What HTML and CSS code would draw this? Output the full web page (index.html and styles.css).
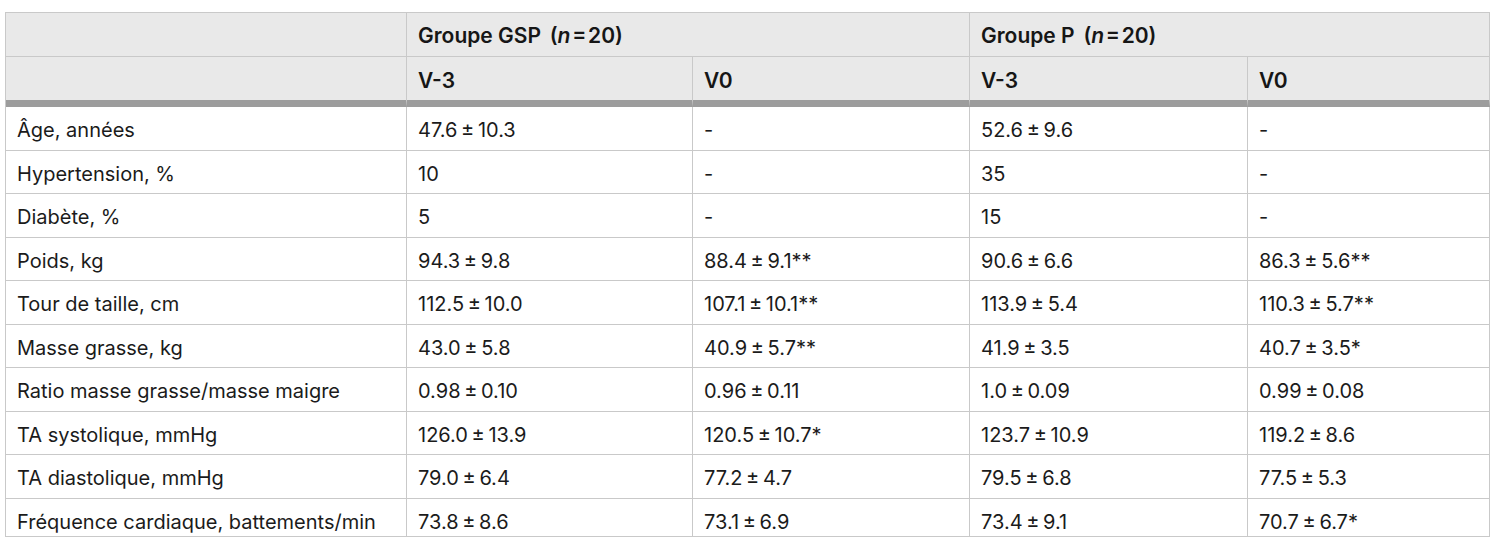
FILE: index.html
```html
<!DOCTYPE html>
<html lang="fr">
<head>
<meta charset="utf-8">
<link rel="stylesheet" href="styles.css">
</head>
<body>
<table class="data">
  <colgroup>
    <col class="c-label">
    <col class="c-a">
    <col class="c-b">
    <col class="c-c">
    <col class="c-d">
  </colgroup>
  <thead>
    <tr class="h1">
      <th></th>
      <th colspan="2">Groupe GSP &#8201;(<i>n</i>&#8202;=&#8202;20)</th>
      <th colspan="2">Groupe P &#8201;(<i>n</i>&#8202;=&#8202;20)</th>
    </tr>
    <tr class="h2">
      <th></th>
      <th>V-3</th>
      <th>V0</th>
      <th>V-3</th>
      <th>V0</th>
    </tr>
  </thead>
  <tbody>
    <tr><td>Âge, années</td><td>47.6&#8201;±&#8201;10.3</td><td>-</td><td>52.6&#8201;±&#8201;9.6</td><td>-</td></tr>
    <tr><td>Hypertension, %</td><td>10</td><td>-</td><td>35</td><td>-</td></tr>
    <tr><td>Diabète, %</td><td>5</td><td>-</td><td>15</td><td>-</td></tr>
    <tr><td>Poids, kg</td><td>94.3&#8201;±&#8201;9.8</td><td>88.4&#8201;±&#8201;9.1**</td><td>90.6&#8201;±&#8201;6.6</td><td>86.3&#8201;±&#8201;5.6**</td></tr>
    <tr><td>Tour de taille, cm</td><td>112.5&#8201;±&#8201;10.0</td><td>107.1&#8201;±&#8201;10.1**</td><td>113.9&#8201;±&#8201;5.4</td><td>110.3&#8201;±&#8201;5.7**</td></tr>
    <tr><td>Masse grasse, kg</td><td>43.0&#8201;±&#8201;5.8</td><td>40.9&#8201;±&#8201;5.7**</td><td>41.9&#8201;±&#8201;3.5</td><td>40.7&#8201;±&#8201;3.5*</td></tr>
    <tr><td>Ratio masse grasse/masse maigre</td><td>0.98&#8201;±&#8201;0.10</td><td>0.96&#8201;±&#8201;0.11</td><td>1.0&#8201;±&#8201;0.09</td><td>0.99&#8201;±&#8201;0.08</td></tr>
    <tr><td>TA systolique, mmHg</td><td>126.0&#8201;±&#8201;13.9</td><td>120.5&#8201;±&#8201;10.7*</td><td>123.7&#8201;±&#8201;10.9</td><td>119.2&#8201;±&#8201;8.6</td></tr>
    <tr><td>TA diastolique, mmHg</td><td>79.0&#8201;±&#8201;6.4</td><td>77.2&#8201;±&#8201;4.7</td><td>79.5&#8201;±&#8201;6.8</td><td>77.5&#8201;±&#8201;5.3</td></tr>
    <tr class="last"><td>Fréquence cardiaque, battements/min</td><td>73.8&#8201;±&#8201;8.6</td><td>73.1&#8201;±&#8201;6.9</td><td>73.4&#8201;±&#8201;9.1</td><td>70.7&#8201;±&#8201;6.7*</td></tr>
  </tbody>
</table>
</body>
</html>
```
FILE: styles.css
```css
html, body {
  margin: 0;
  padding: 0;
  background: #ffffff;
}

body {
  font-family: Inter, "Noto Sans", "Liberation Sans", sans-serif;
  color: #1b1b1b;
}

.data {
  margin: 12px 0 0 5px;
  width: 1484px;
  table-layout: fixed;
  border-collapse: separate;
  border-spacing: 0;
  border-top: 1px solid #c9c9c9;
  border-left: 1px solid #c9c9c9;
}

.c-label { width: 401px; }
.c-a { width: 286px; }
.c-b { width: 277px; }
.c-c { width: 278px; }
.c-d { width: 242px; }

.data th,
.data td {
  border-right: 1px solid #c9c9c9;
  border-bottom: 1px solid #c9c9c9;
  padding: 0 0 0 11px;
  text-align: left;
  vertical-align: top;
  box-sizing: border-box;
  white-space: nowrap;
}

.data th {
  background: #e9e9e9;
  font-weight: 600;
  font-size: 21px;
  line-height: 25px;
  padding-top: 10px;
  height: 44px;
  color: #161616;
}

.data th i {
  font-style: italic;
}

.h2 th {
  height: 50px;
  border-bottom: 7px solid #9c9c9c;
  padding-top: 11px;
}

.data td {
  font-size: 20px;
  line-height: 24px;
  font-weight: 400;
  padding-top: 11px;
  height: 43.5px;
}

.data tr.last td {
  height: 38px;
}
```
